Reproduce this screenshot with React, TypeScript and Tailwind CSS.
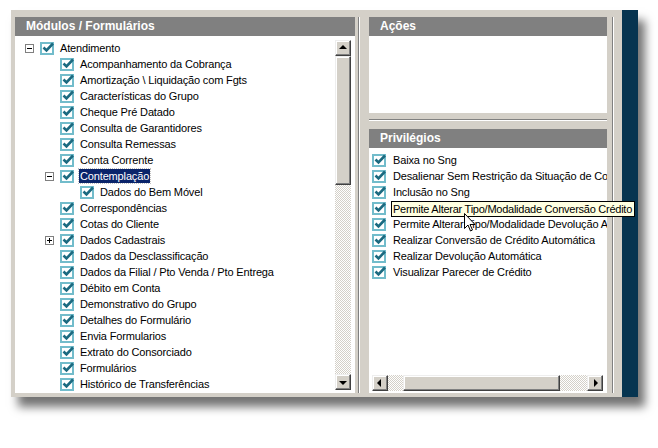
import React from 'react';

type Node = { label: string; level: number; exp?: '-' | '+'; selected?: boolean };

const TREE: Node[] = [
  { label: 'Atendimento', level: 0, exp: '-' },
  { label: 'Acompanhamento da Cobrança', level: 1 },
  { label: 'Amortização \\ Liquidação com Fgts', level: 1 },
  { label: 'Características do Grupo', level: 1 },
  { label: 'Cheque Pré Datado', level: 1 },
  { label: 'Consulta de Garantidores', level: 1 },
  { label: 'Consulta Remessas', level: 1 },
  { label: 'Conta Corrente', level: 1 },
  { label: 'Contemplação', level: 1, exp: '-', selected: true },
  { label: 'Dados do Bem Móvel', level: 2 },
  { label: 'Correspondências', level: 1 },
  { label: 'Cotas do Cliente', level: 1 },
  { label: 'Dados Cadastrais', level: 1, exp: '+' },
  { label: 'Dados da Desclassificação', level: 1 },
  { label: 'Dados da Filial / Pto Venda / Pto Entrega', level: 1 },
  { label: 'Débito em Conta', level: 1 },
  { label: 'Demonstrativo do Grupo', level: 1 },
  { label: 'Detalhes do Formulário', level: 1 },
  { label: 'Envia Formularios', level: 1 },
  { label: 'Extrato do Consorciado', level: 1 },
  { label: 'Formulários', level: 1 },
  { label: 'Histórico de Transferências', level: 1 },
];

const PRIVS = [
  'Baixa no Sng',
  'Desalienar Sem Restrição da Situação de Conta',
  'Inclusão no Sng',
  'Permite Alterar Tipo/Modalidade Conversão Crédito',
  'Permite Alterar Tipo/Modalidade Devolução Automática',
  'Realizar Conversão de Crédito Automática',
  'Realizar Devolução Automática',
  'Visualizar Parecer de Crédito',
];

const PAD = ['pl-[10px]', 'pl-[30px]', 'pl-[50px]'];

function Check() {
  return (
    <svg width="15" height="14" viewBox="0 0 15 14" className="shrink-0">
      <rect x="1" y="2" width="12" height="11" fill="#fff" stroke="#72bccb" strokeWidth="2" />
      <path d="M3.5 6.5 L6.5 9.5 L13 2.5" fill="none" stroke="#1c6a80" strokeWidth="2.6" />
    </svg>
  );
}

function Expander({ kind }: { kind: '-' | '+' }) {
  return (
    <svg width="9" height="9" viewBox="0 0 9 9">
      <rect x="0.5" y="0.5" width="8" height="8" fill="#fff" stroke="#808080" />
      <path d="M2 4.5 H7" stroke="#000" />
      {kind === '+' && <path d="M4.5 2 V7" stroke="#000" />}
    </svg>
  );
}

function Btn({ dir }: { dir: 'up' | 'down' | 'left' | 'right' }) {
  const tri = {
    up: 'M4 9 L8 5 L12 9 Z',
    down: 'M4 7 L8 11 L12 7 Z',
    left: 'M9 4 L5 8 L9 12 Z',
    right: 'M7 4 L11 8 L7 12 Z',
  }[dir];
  return (
    <div className="w-[16px] h-[16px] shrink-0 bg-[#d4d0c8] border border-t-[#eeeeee] border-l-[#eeeeee] border-r-[#404040] border-b-[#404040] shadow-[inset_-1px_-1px_#808080,inset_1px_1px_#ffffff]">
      <svg width="14" height="14" viewBox="1 1 14 14">
        <path d={tri} fill="#000" />
      </svg>
    </div>
  );
}

const TRACK = 'bg-[repeating-conic-gradient(#d4d0c8_0_25%,#ffffff_0_50%)] bg-[length:2px_2px]';
const THUMB = 'bg-[#d4d0c8] border border-t-[#eeeeee] border-l-[#eeeeee] border-r-[#404040] border-b-[#404040] shadow-[inset_-1px_-1px_#808080,inset_1px_1px_#ffffff]';

function Header({ title }: { title: string }) {
  return (
    <div className="h-[19px] shrink-0 bg-[#808080] text-white font-bold text-[12px] leading-[19px] pl-[11px] tracking-normal whitespace-nowrap overflow-hidden">
      {title}
    </div>
  );
}

export default function App() {
  return (
    <div className="w-[658px] h-[448px] bg-white overflow-hidden pt-[10px] pl-[11px] font-['Liberation_Sans',Arial,sans-serif] text-[11px] tracking-[-0.15px] text-black">
      <div className="relative flex w-[627px] h-[387px] shadow-[7px_10px_9px_rgba(0,0,0,0.55)]">
        {/* Main gray frame */}
        <div className="flex-1 flex bg-[#d4d0c8] pt-[7px] pl-[4px] pb-[4px]">
          {/* Módulos */}
          <div className="w-[340px] flex flex-col">
            <Header title="Módulos / Formulários" />
            <div className="flex-1 bg-white flex min-h-0">
              <div className="flex-1 pt-[4px] overflow-hidden">
                {TREE.map((n, i) => (
                  <div key={i} className={`h-[16px] flex items-center ${PAD[n.level]} whitespace-nowrap`}>
                    <div className="w-[15px] shrink-0 flex items-center">{n.exp && <Expander kind={n.exp} />}</div>
                    <div className="w-[20px] shrink-0 flex items-center"><Check /></div>
                    <span
                      className={
                        n.selected
                          ? 'bg-[#0a246a] text-white px-[1px] -ml-[1px] leading-[14px] outline outline-1 outline-dotted outline-[#c0c0c0]'
                          : ''
                      }
                    >
                      {n.label}
                    </span>
                  </div>
                ))}
              </div>
              {/* vertical scrollbar */}
              <div className="w-[16px] mt-[4px] mb-[3px] mr-[4px] flex flex-col">
                <Btn dir="up" />
                <div className={`flex-1 flex flex-col ${TRACK}`}>
                  <div className={`h-[129px] ${THUMB}`} />
                </div>
                <Btn dir="down" />
              </div>
            </div>
          </div>

          {/* splitter */}
          <div className="w-[14px] flex pl-[3px]">
            <div className="w-px bg-[#808080]" />
            <div className="w-px bg-white" />
          </div>

          {/* right column */}
          <div className="w-[238px] flex flex-col">
            <Header title="Ações" />
            <div className="h-[77px] bg-white shrink-0" />
            <div className="h-[16px] shrink-0 flex flex-col pt-[6px]">
              <div className="h-px bg-[#808080]" />
              <div className="h-px bg-white" />
            </div>
            <Header title="Privilégios" />
            <div className="flex-1 bg-white flex flex-col pt-[4px] pl-[3px] min-h-0">
              <div className="flex-1 overflow-hidden pr-[4px]">
                {PRIVS.map((p) => (
                  <div key={p} className="h-[16px] flex items-center whitespace-nowrap">
                    <div className="w-[21px] shrink-0 flex items-center"><Check /></div>
                    <span>{p}</span>
                  </div>
                ))}
              </div>
              {/* horizontal scrollbar */}
              <div className="h-[16px] flex mr-[4px] mb-[2px]">
                <Btn dir="left" />
                <div className={`flex-1 flex pl-[15px] ${TRACK}`}>
                  <div className={`w-[157px] ${THUMB}`} />
                </div>
                <Btn dir="right" />
              </div>
            </div>
          </div>

          {/* right edge */}
          <div className="w-[15px] flex pl-[5px]">
            <div className="w-px bg-[#808080]" />
            <div className="w-px bg-white" />
          </div>
        </div>
        {/* dark strip */}
        <div className="w-[16px] bg-[#063450]" />

        {/* tooltip */}
        <div className="absolute left-[380px] top-[191px] h-[16px] pl-[1px] pr-[2px] bg-[#ffffe1] border border-black leading-[14px] tracking-[-0.25px] whitespace-nowrap">
          Permite Alterar Tipo/Modalidade Conversão Crédito
        </div>
        {/* cursor */}
        <svg className="absolute left-[453px] top-[203px]" width="12" height="19" viewBox="0 0 12 19">
          <path d="M0.5 0.5 L0.5 15.5 L4 12 L6.5 18 L8.5 17 L6 11.5 L11 11.5 Z" fill="#fff" stroke="#000" strokeWidth="1" />
        </svg>
      </div>
    </div>
  );
}
